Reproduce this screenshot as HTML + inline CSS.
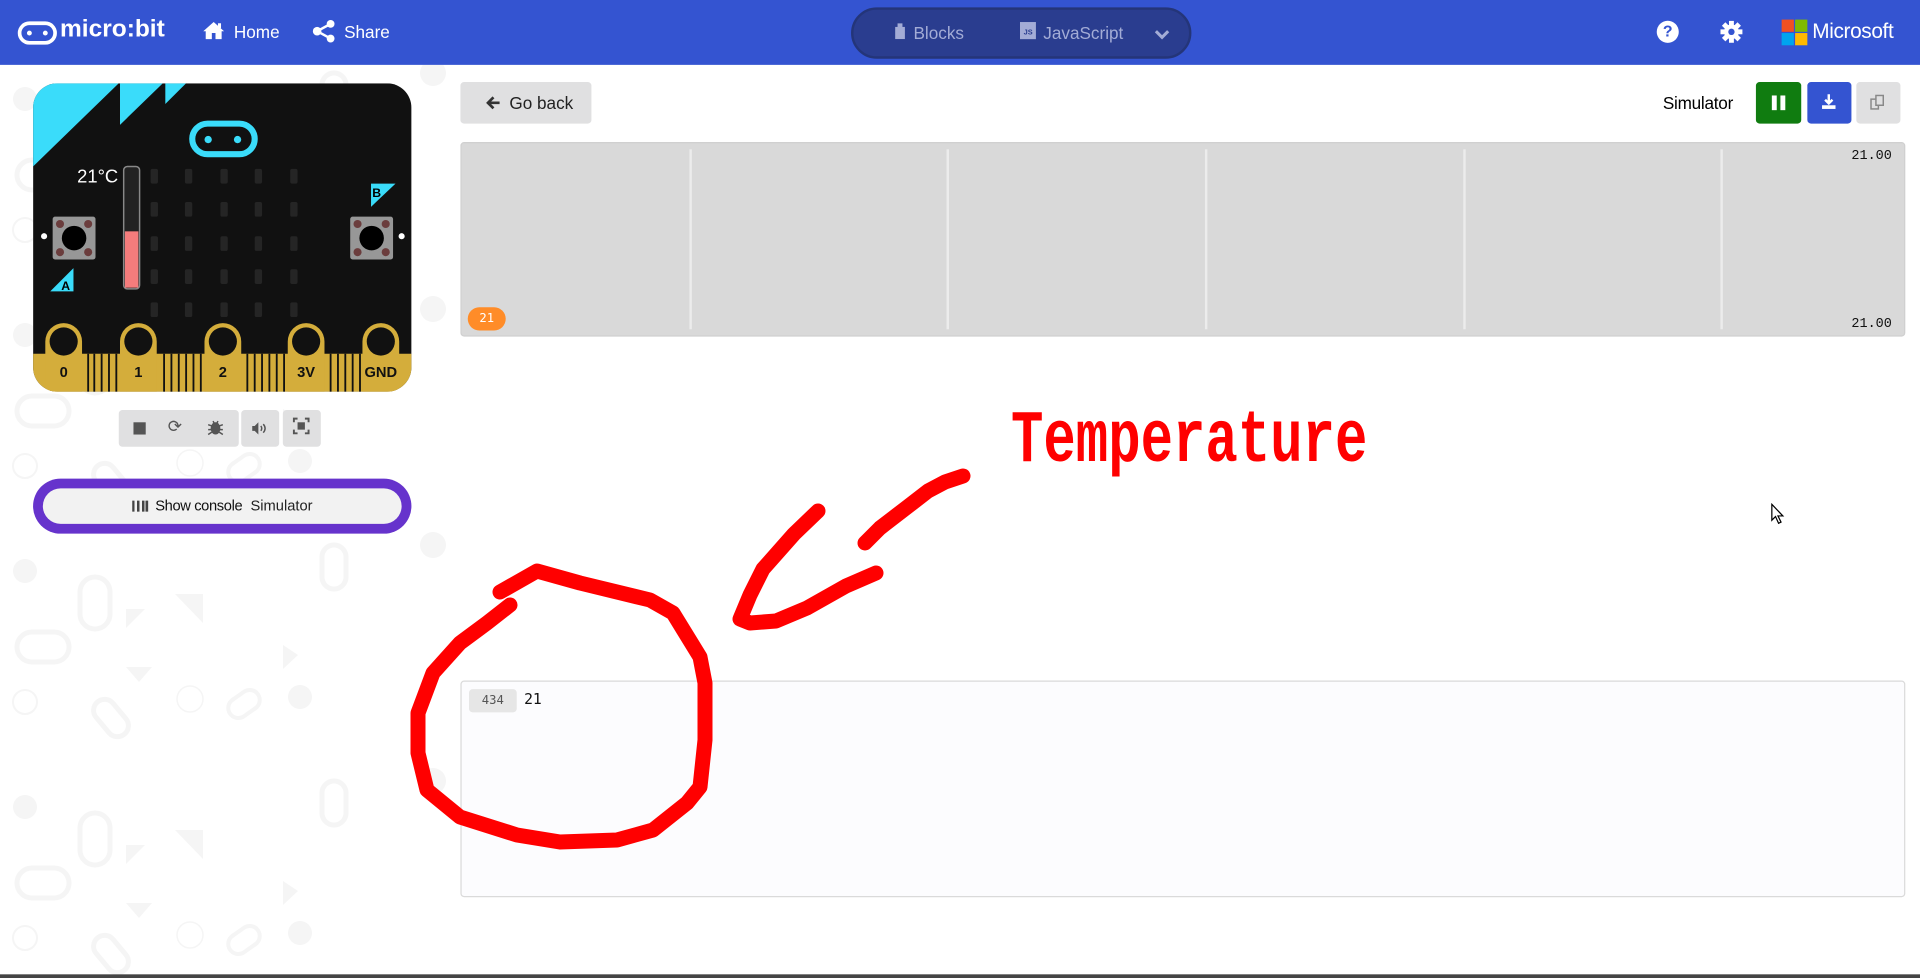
<!DOCTYPE html>
<html><head><meta charset="utf-8">
<style>
*{box-sizing:border-box;margin:0;padding:0}
html,body{width:1920px;height:978px;overflow:hidden;background:#fff;font-family:"Liberation Sans",sans-serif}
#bg{position:absolute;left:0;top:65px}
#s{position:absolute;left:0;top:0;width:1568px;height:799px;transform:scale(1.22449,1.22403);transform-origin:0 0}
.a{position:absolute}
.hdr{left:0;top:0;width:1568px;height:53px;background:#3454d1;color:#fff}
.ht{font-size:14px;color:#fff}
.btn{background:#e0e0e1;border-radius:3px}
.mono{font-family:"Liberation Mono",monospace}
</style></head><body>
<svg id="bg" width="450" height="913" viewBox="0 0 450 913">
<defs><pattern id="p" width="450" height="236" patternUnits="userSpaceOnUse" y="-20">
<g fill="#f5f5f5" stroke="none">
<circle cx="25" cy="54" r="12"/><circle cx="433" cy="28" r="13"/>
<rect x="80" y="60" width="30" height="52" rx="15" fill="none" stroke="#f5f5f5" stroke-width="5"/>
<rect x="17" y="115" width="52" height="30" rx="15" fill="none" stroke="#f5f5f5" stroke-width="5"/>
<rect x="322" y="28" width="24" height="44" rx="12" fill="none" stroke="#f5f5f5" stroke-width="5"/>
<circle cx="25" cy="185" r="12" fill="none" stroke="#f5f5f5" stroke-width="2"/>
<circle cx="190" cy="182" r="13" fill="none" stroke="#f5f5f5" stroke-width="1.5"/>
<circle cx="300" cy="180" r="12"/>
<polygon points="175,77 203,77 203,106"/><polygon points="126,92 145,92 126,111"/>
<rect x="100" y="180" width="22" height="42" rx="11" transform="rotate(-40 111 201)" fill="none" stroke="#f5f5f5" stroke-width="5"/>
<rect x="234" y="170" width="20" height="34" rx="10" transform="rotate(55 244 187)" fill="none" stroke="#f5f5f5" stroke-width="4"/>
<polygon points="126,150 152,150 139,165"/><polygon points="283,128 298,138 283,152"/>
</g></pattern></defs>
<rect width="450" height="913" fill="url(#p)"/>
</svg>

<div id="s">
<div class="a hdr"></div>
<svg class="a" style="left:14px;top:16px" width="34" height="22" viewBox="0 0 34 22"><rect x="2" y="3" width="29" height="16" rx="8" fill="none" stroke="#fff" stroke-width="3"/><circle cx="10" cy="11" r="2" fill="#fff"/><circle cx="23" cy="11" r="2" fill="#fff"/></svg>
<div class="a" style="left:49px;top:13px;font-size:20px;font-weight:bold;color:#fff">micro:bit</div>
<svg class="a" style="left:165px;top:17px" width="19" height="16" viewBox="0 0 19 16"><path d="M9.5 1 L1 8.5 L3 8.5 L3 15 L8 15 L8 10 L11 10 L11 15 L16 15 L16 8.5 L18 8.5 Z" fill="#fff"/><rect x="13" y="2" width="2.5" height="4" fill="#fff"/></svg>
<div class="a ht" style="left:191px;top:18px">Home</div>
<svg class="a" style="left:255px;top:16px" width="19" height="19" viewBox="0 0 19 19"><circle cx="4" cy="9.5" r="3.5" fill="#fff"/><circle cx="15" cy="3.5" r="3.2" fill="#fff"/><circle cx="15" cy="15.5" r="3.2" fill="#fff"/><path d="M4 9.5L15 3.5M4 9.5L15 15.5" stroke="#fff" stroke-width="2"/></svg>
<div class="a ht" style="left:281px;top:18px">Share</div>
<div class="a" style="left:695px;top:6px;width:278px;height:42px;border-radius:21px;background:#2a3d8f;border:2px solid #243579"></div>
<svg class="a" style="left:731px;top:19px" width="9" height="13"><rect x="0" y="3" width="8" height="10" fill="#a3acd6"/><rect x="2" y="0" width="4" height="4" fill="#a3acd6"/></svg>
<div class="a" style="left:746px;top:19px;font-size:14px;color:#a3acd6">Blocks</div>
<div class="a" style="left:833px;top:18px;width:13px;height:14px;background:#a3acd6;font-size:6px;color:#2a3d8f;font-weight:bold;padding:6px 0 0 3px">JS</div>
<div class="a" style="left:852px;top:19px;font-size:14px;color:#a3acd6">JavaScript</div>
<svg class="a" style="left:943px;top:24px" width="12" height="9"><path d="M1 1.5L6 6.5L11 1.5" stroke="#a3acd6" stroke-width="2.5" fill="none"/></svg>
<div class="a" style="left:1353px;top:17px;width:18px;height:18px;border-radius:50%;background:#fff;color:#3454d1;font-weight:bold;font-size:13px;text-align:center;line-height:18px">?</div>
<svg class="a" style="left:1405px;top:17px" width="18" height="18" viewBox="0 0 18 18"><g fill="#fff"><circle cx="9" cy="9" r="6"/><rect x="7" y="0" width="4" height="18"/><rect x="0" y="7" width="18" height="4"/><rect x="7" y="0" width="4" height="18" transform="rotate(45 9 9)"/><rect x="7" y="0" width="4" height="18" transform="rotate(-45 9 9)"/></g><circle cx="9" cy="9" r="2.6" fill="#3454d1"/></svg>
<div class="a" style="left:1455px;top:16px;width:10px;height:10px;background:#f25022"></div>
<div class="a" style="left:1466px;top:16px;width:10px;height:10px;background:#7fba00"></div>
<div class="a" style="left:1455px;top:27px;width:10px;height:10px;background:#00a4ef"></div>
<div class="a" style="left:1466px;top:27px;width:10px;height:10px;background:#ffb900"></div>
<div class="a" style="left:1480px;top:16px;font-size:17px;color:#fff;letter-spacing:-0.3px">Microsoft</div>

<svg class="a" style="left:27px;top:68px" width="310" height="253" viewBox="27 68 310 253">
<defs><clipPath id="bc"><rect x="27" y="68" width="309" height="252" rx="20"/></clipPath></defs>
<g clip-path="url(#bc)">
<rect x="27" y="68" width="309" height="252" fill="#111"/>
<polygon points="27,68 97,68 27,136" fill="#3adcfa"/>
<polygon points="98,68 133,68 98,102" fill="#3adcfa"/>
<polygon points="135,68 152,68 135,85" fill="#3adcfa"/>
<rect x="157" y="101" width="51" height="25" rx="12.5" fill="none" stroke="#3adcfa" stroke-width="5"/>
<circle cx="170" cy="114" r="3" fill="#3adcfa"/><circle cx="194" cy="114" r="3" fill="#3adcfa"/>
<g fill="#252525">
<rect x="123" y="138" width="6" height="12" rx="1.5"/><rect x="151" y="138" width="6" height="12" rx="1.5"/><rect x="180" y="138" width="6" height="12" rx="1.5"/><rect x="208" y="138" width="6" height="12" rx="1.5"/><rect x="237" y="138" width="6" height="12" rx="1.5"/>
<rect x="123" y="165" width="6" height="12" rx="1.5"/><rect x="151" y="165" width="6" height="12" rx="1.5"/><rect x="180" y="165" width="6" height="12" rx="1.5"/><rect x="208" y="165" width="6" height="12" rx="1.5"/><rect x="237" y="165" width="6" height="12" rx="1.5"/>
<rect x="123" y="193" width="6" height="12" rx="1.5"/><rect x="151" y="193" width="6" height="12" rx="1.5"/><rect x="180" y="193" width="6" height="12" rx="1.5"/><rect x="208" y="193" width="6" height="12" rx="1.5"/><rect x="237" y="193" width="6" height="12" rx="1.5"/>
<rect x="123" y="220" width="6" height="12" rx="1.5"/><rect x="151" y="220" width="6" height="12" rx="1.5"/><rect x="180" y="220" width="6" height="12" rx="1.5"/><rect x="208" y="220" width="6" height="12" rx="1.5"/><rect x="237" y="220" width="6" height="12" rx="1.5"/>
<rect x="123" y="247" width="6" height="12" rx="1.5"/><rect x="151" y="247" width="6" height="12" rx="1.5"/><rect x="180" y="247" width="6" height="12" rx="1.5"/><rect x="208" y="247" width="6" height="12" rx="1.5"/><rect x="237" y="247" width="6" height="12" rx="1.5"/>
</g>
<text x="63" y="149" fill="#fff" font-family="Liberation Sans" font-size="15">21°C</text>
<rect x="101" y="136" width="13" height="100" rx="3" fill="#222" stroke="#888" stroke-width="1.2"/>
<rect x="102" y="189" width="11" height="46" fill="#f47c7c"/>
<rect x="43" y="177" width="35" height="35" rx="2" fill="#979797"/><circle cx="60.5" cy="194.5" r="10" fill="#000"/>
<g fill="#6b3d3d"><circle cx="49" cy="183" r="3.3"/><circle cx="72" cy="183" r="3.3"/><circle cx="49" cy="206" r="3.3"/><circle cx="72" cy="206" r="3.3"/></g>
<rect x="286" y="177" width="35" height="35" rx="2" fill="#979797"/><circle cx="303.5" cy="194.5" r="10" fill="#000"/>
<g fill="#6b3d3d"><circle cx="292" cy="183" r="3.3"/><circle cx="315" cy="183" r="3.3"/><circle cx="292" cy="206" r="3.3"/><circle cx="315" cy="206" r="3.3"/></g>
<circle cx="36" cy="193" r="2.5" fill="#fff"/><circle cx="328" cy="193" r="2.5" fill="#fff"/>
<polygon points="41,238 60,238 60,219" fill="#3adcfa"/><text x="50" y="237" font-size="10" font-weight="bold" fill="#000" font-family="Liberation Sans">A</text>
<polygon points="303,150 323,150 303,169" fill="#3adcfa"/><text x="304" y="161" font-size="10" font-weight="bold" fill="#000" font-family="Liberation Sans">B</text>
<rect x="27" y="289" width="309" height="31" fill="#d4ad3b"/>
<g stroke="#111" stroke-width="1.5">
<line x1="72" y1="289" x2="72" y2="320"/><line x1="77" y1="289" x2="77" y2="320"/><line x1="83" y1="289" x2="83" y2="320"/><line x1="89" y1="289" x2="89" y2="320"/><line x1="95" y1="289" x2="95" y2="320"/>
<line x1="134" y1="289" x2="134" y2="320"/><line x1="140" y1="289" x2="140" y2="320"/><line x1="146" y1="289" x2="146" y2="320"/><line x1="152" y1="289" x2="152" y2="320"/><line x1="158" y1="289" x2="158" y2="320"/><line x1="164" y1="289" x2="164" y2="320"/>
<line x1="202" y1="289" x2="202" y2="320"/><line x1="208" y1="289" x2="208" y2="320"/><line x1="214" y1="289" x2="214" y2="320"/><line x1="220" y1="289" x2="220" y2="320"/><line x1="226" y1="289" x2="226" y2="320"/><line x1="232" y1="289" x2="232" y2="320"/>
<line x1="270" y1="289" x2="270" y2="320"/><line x1="276" y1="289" x2="276" y2="320"/><line x1="282" y1="289" x2="282" y2="320"/><line x1="288" y1="289" x2="288" y2="320"/><line x1="294" y1="289" x2="294" y2="320"/>
</g>
<g fill="#d4ad3b">
<path d="M37 320 V279 a15 15 0 0 1 30 0 V320Z"/><path d="M98 320 V279 a15 15 0 0 1 30 0 V320Z"/><path d="M167 320 V279 a15 15 0 0 1 30 0 V320Z"/><path d="M235 320 V279 a15 15 0 0 1 30 0 V320Z"/><path d="M296 320 V279 a15 15 0 0 1 30 0 V320Z"/>
</g>
<g fill="#111"><circle cx="52" cy="279" r="11.5"/><circle cx="113" cy="279" r="11.5"/><circle cx="182" cy="279" r="11.5"/><circle cx="250" cy="279" r="11.5"/><circle cx="311" cy="279" r="11.5"/></g>
<g font-family="Liberation Sans" font-weight="bold" font-size="12" fill="#111" text-anchor="middle">
<text x="52" y="308">0</text><text x="113" y="308">1</text><text x="182" y="308">2</text><text x="250" y="308">3V</text><text x="311" y="308">GND</text></g>
</g></svg>

<div class="a btn" style="left:97px;top:335px;width:98px;height:30px"></div>
<div class="a btn" style="left:197px;top:335px;width:31px;height:30px"></div>
<div class="a btn" style="left:231px;top:335px;width:31px;height:30px"></div>
<div class="a" style="left:109px;top:345px;width:10px;height:10px;background:#555"></div>
<div class="a" style="left:137px;top:340px;font-size:14px;color:#555">⟳</div>
<svg class="a" style="left:169px;top:342px" width="14" height="14" viewBox="0 0 14 14"><ellipse cx="7" cy="8" rx="4" ry="5" fill="#555"/><path d="M1 5L4 6M1 9h3M1 13l3-2M13 5l-3 1M13 9h-3M13 13l-3-2M5 2l1 2M9 2l-1 2" stroke="#555" stroke-width="1.2"/></svg>
<svg class="a" style="left:205px;top:344px" width="13" height="12" viewBox="0 0 13 12"><path d="M1 4h2l3-3v10l-3-3H1z" fill="#555"/><path d="M8 4q1.5 2 0 4M10 2.5q3 3.5 0 7" stroke="#555" stroke-width="1.2" fill="none"/></svg>
<svg class="a" style="left:239px;top:341px" width="14" height="14" viewBox="0 0 14 14"><path d="M1 4V1h3M10 1h3v3M13 10v3h-3M4 13H1v-3" stroke="#555" stroke-width="1.6" fill="none"/><rect x="4" y="4" width="6" height="6" fill="#555"/></svg>

<div class="a" style="left:27px;top:391px;width:309px;height:45px;border-radius:23px;background:#6633cc"></div>
<div class="a" style="left:35px;top:399px;width:293px;height:29px;border-radius:15px;background:#f2f2f2;font-size:12px;color:#111;text-align:center;line-height:29px">
<span style="display:inline-block;width:13px;height:9px;vertical-align:middle;margin-right:6px;background:linear-gradient(to right,#444 0 2px,transparent 2px 4px,#444 4px 6px,transparent 6px 8px,#444 8px 10px,transparent 10px 11px,#444 11px 13px)"></span><span style="letter-spacing:-0.3px">Show console</span>&nbsp; <span style="color:#222">Simulator</span></div>

<div class="a btn" style="left:376px;top:67px;width:107px;height:34px"></div>
<svg class="a" style="left:397px;top:78px" width="12" height="12" viewBox="0 0 12 12"><path d="M11 6H2M6 1.5L1.5 6L6 10.5" stroke="#333" stroke-width="2.2" fill="none"/></svg>
<div class="a" style="left:416px;top:76px;font-size:14px;color:#222">Go back</div>

<div class="a" style="left:1358px;top:76px;font-size:14px;color:#000;letter-spacing:-0.2px">Simulator</div>
<div class="a" style="left:1434px;top:67px;width:37px;height:34px;background:#107c10;border-radius:3px"></div>
<div class="a" style="left:1447px;top:78px;width:4px;height:12px;background:#fff"></div>
<div class="a" style="left:1454px;top:78px;width:4px;height:12px;background:#fff"></div>
<div class="a" style="left:1476px;top:67px;width:36px;height:34px;background:#3454d1;border-radius:3px"></div>
<svg class="a" style="left:1487px;top:76px" width="13" height="14" viewBox="0 0 13 14"><path d="M6.5 1v7M3.5 5.5l3 3 3-3" stroke="#fff" stroke-width="2" fill="none"/><rect x="1" y="10" width="11" height="3" fill="#fff"/></svg>
<div class="a" style="left:1516px;top:67px;width:36px;height:34px;background:#e0e0e1;border-radius:3px"></div>
<svg class="a" style="left:1527px;top:77px" width="13" height="14" viewBox="0 0 13 14"><rect x="1" y="4" width="6" height="8" fill="none" stroke="#888" stroke-width="1.2"/><rect x="5" y="1" width="6" height="8" fill="#e0e0e1" stroke="#888" stroke-width="1.2"/></svg>

<div class="a" style="left:376px;top:116px;width:1180px;height:159px;background:#d9d9d9;border:1px solid #d0d0d0;border-radius:3px"></div>
<div class="a" style="left:563px;top:122px;width:2px;height:147px;background:#ececec"></div>
<div class="a" style="left:773px;top:122px;width:2px;height:147px;background:#ececec"></div>
<div class="a" style="left:984px;top:122px;width:2px;height:147px;background:#ececec"></div>
<div class="a" style="left:1195px;top:122px;width:2px;height:147px;background:#ececec"></div>
<div class="a" style="left:1405px;top:122px;width:2px;height:147px;background:#ececec"></div>
<div class="a mono" style="left:1500px;top:122px;width:45px;text-align:right;font-size:11px;color:#111">21.00</div>
<div class="a mono" style="left:1500px;top:259px;width:45px;text-align:right;font-size:11px;color:#111">21.00</div>
<div class="a" style="left:382px;top:251px;width:31px;height:19px;border-radius:10px;background:#ff8c28;color:#fff;font-size:10px;text-align:center;line-height:19px;font-family:'DejaVu Sans Mono',monospace">21</div>

<div class="a" style="left:376px;top:556px;width:1180px;height:177px;background:#fcfcfe;border:1px solid #dadada;border-radius:3px"></div>
<div class="a" style="left:383px;top:563px;width:39px;height:19px;background:#e6e6e6;border-radius:3px;color:#555;font-size:10px;text-align:center;line-height:19px;font-family:'DejaVu Sans Mono',monospace">434</div>
<div class="a" style="left:428px;top:564px;font-size:12px;color:#111;font-family:'DejaVu Sans Mono',monospace">21</div>

<svg class="a" style="left:1446px;top:411px" width="12" height="18" viewBox="0 0 12 18"><path d="M1 1V14L4 11L6.5 16.5L8.5 15.5L6 10.5H10Z" fill="#fff" stroke="#000" stroke-width="1"/></svg>

<div class="a" style="left:0;top:796px;width:1568px;height:3px;background:#444"></div>
</div>

<div style="position:absolute;left:1011px;top:416px;font-family:'Liberation Mono',monospace;font-weight:bold;font-size:54px;color:#ff0000;transform:scaleY(1.37);transform-origin:0 50%;line-height:54px;white-space:nowrap">Temperature</div>
<svg style="position:absolute;left:0;top:0" width="1920" height="978">
<g fill="none" stroke="#ff0000" stroke-width="15" stroke-linecap="round" stroke-linejoin="round">
<polyline points="963,476 945,482 928,491 906,508 880,528 865,543"/>
<polyline points="818,511 794,534 763,569 750,595 740,619 750,623 776,621 807,608 846,586 876,573"/>
<polyline points="500,592 537,571 580,583 650,600 673,613 700,657 705,683 705,740 700,787 687,803 653,830 617,840 560,842 517,835 460,817 427,790 418,753 418,713 433,673 460,643 487,623 510,605"/>
</g></svg>
</body></html>
